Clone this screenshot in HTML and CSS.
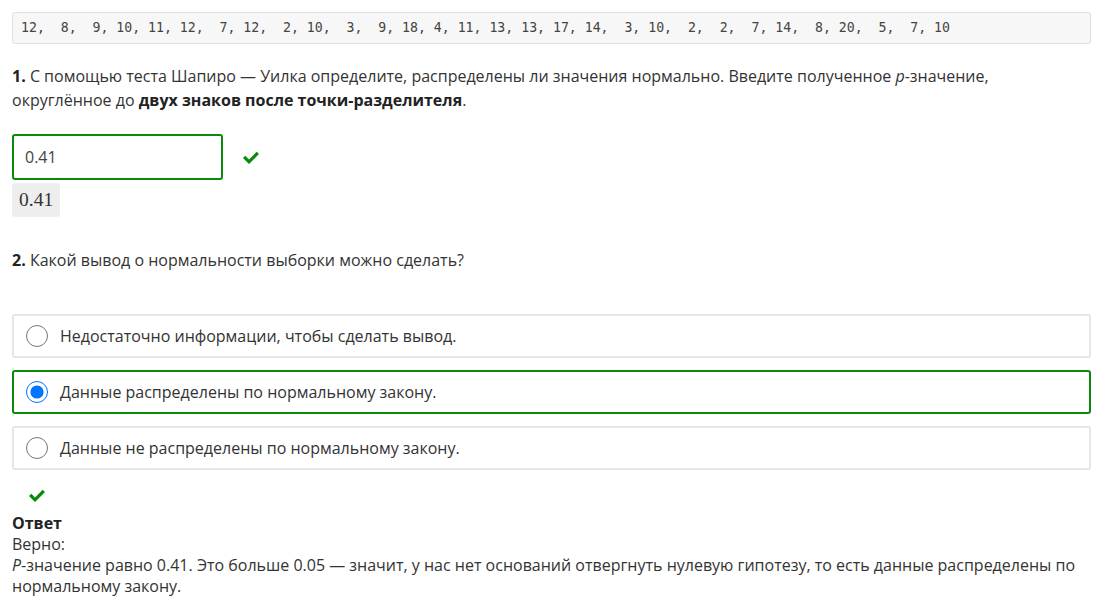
FILE: index.html
```html
<!DOCTYPE html>
<html lang="ru">
<head>
<meta charset="utf-8">
<link rel="stylesheet" href="styles.css">
</head>
<body>
<div class="page">
  <pre class="data">12,  8,  9, 10, 11, 12,  7, 12,  2, 10,  3,  9, 18, 4, 11, 13, 13, 17, 14,  3, 10,  2,  2,  7, 14,  8, 20,  5,  7, 10</pre>

  <p class="question q1"><b>1.</b> С помощью теста Шапиро — Уилка определите, распределены ли значения нормально. Введите полученное <i>p</i>-значение, округлённое до <b>двух знаков после точки-разделителя</b>.</p>

  <div class="answer-row">
    <div class="text-input">0.41</div>
    <svg class="check" viewBox="0 0 16 13" width="16" height="13"><polygon points="0,7 2.3,4.7 6,8.4 13.7,0.7 16,3 6,13"/></svg>
  </div>
  <div class="preview">0.41</div>

  <p class="question q2"><b>2.</b> Какой вывод о нормальности выборки можно сделать?</p>

  <div class="options">
    <label class="option"><input type="radio" name="q2"><span>Недостаточно информации, чтобы сделать вывод.</span></label>
    <label class="option correct"><input type="radio" name="q2" checked><span>Данные распределены по нормальному закону.</span></label>
    <label class="option"><input type="radio" name="q2"><span>Данные не распределены по нормальному закону.</span></label>
  </div>

  <svg class="check check2" viewBox="0 0 16 13" width="16" height="13"><polygon points="0,7 2.3,4.7 6,8.4 13.7,0.7 16,3 6,13"/></svg>

  <div class="feedback">
    <div class="fb-title">Ответ</div>
    <div>Верно:</div>
    <div><i>P</i>-значение равно 0.41. Это больше 0.05 — значит, у нас нет оснований отвергнуть нулевую гипотезу, то есть данные распределены по нормальному закону.</div>
  </div>
</div>
</body>
</html>
```

FILE: styles.css
```css
html, body {
  margin: 0;
  padding: 0;
  background: #fff;
}
body {
  font-family: "Open Sans", "Noto Sans", sans-serif;
  font-size: 16px;
  color: #333;
}
.page {
  padding: 12px 12px 0 12px;
}
.data {
  margin: 0;
  box-sizing: border-box;
  height: 32px;
  padding: 0 8px;
  line-height: 29px;
  font-family: "DejaVu Sans Mono", "Liberation Mono", monospace;
  font-size: 13.2px;
  color: #444;
  background: #f7f7f7;
  border: 1px solid #dedede;
  border-radius: 3px;
  white-space: pre;
}
.question {
  margin: 0;
  line-height: 24px;
}
.q1 {
  margin-top: 20px;
}
.question b {
  color: #222;
}
.answer-row {
  margin-top: 22px;
  display: flex;
  align-items: center;
  gap: 20px;
}
.text-input {
  box-sizing: border-box;
  width: 211px;
  height: 46px;
  border: 2px solid #0a8a0a;
  border-radius: 3px;
  padding: 0 11px;
  line-height: 42px;
  color: #444;
}
.check {
  fill: #0a8a0a;
  display: block;
}
.preview {
  margin-top: 3px;
  display: inline-block;
  box-sizing: border-box;
  height: 34px;
  padding: 0 7px;
  line-height: 34px;
  background: #eeeeee;
  border-radius: 3px;
  font-family: "Liberation Serif", "DejaVu Serif", serif;
  font-size: 19.5px;
  color: #333;
}
.q2 {
  margin-top: 31px;
}
.options {
  margin-top: 42px;
  display: flex;
  flex-direction: column;
  gap: 12px;
}
.option {
  box-sizing: border-box;
  height: 44px;
  border: 2px solid #e6e6e6;
  border-radius: 3px;
  display: flex;
  align-items: center;
  gap: 12px;
  padding: 0 12px;
}
.option.correct {
  border-color: #0a8a0a;
}
.option input {
  width: 22px;
  height: 22px;
  margin: 0;
  accent-color: #0075ff;
}
.check2 {
  margin: 19px 0 0 17px;
}
.feedback {
  margin-top: 11px;
  line-height: 21px;
}
.fb-title {
  font-weight: 700;
  color: #222;
}
```
